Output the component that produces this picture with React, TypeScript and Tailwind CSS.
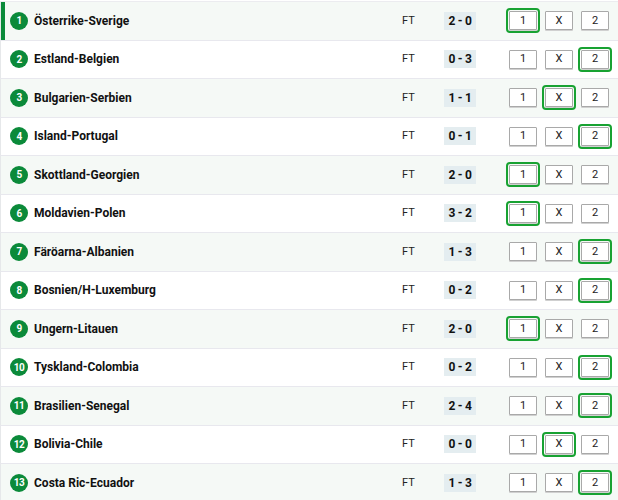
import React from 'react';

type Pick = '1' | 'X' | '2';

interface Match {
    id: number;
    name: string;
    score: string;
    pick: Pick;
}

const MATCHES: Match[] = [
    { id: 1, name: 'Österrike-Sverige', score: '2 - 0', pick: '1' },
    { id: 2, name: 'Estland-Belgien', score: '0 - 3', pick: '2' },
    { id: 3, name: 'Bulgarien-Serbien', score: '1 - 1', pick: 'X' },
    { id: 4, name: 'Island-Portugal', score: '0 - 1', pick: '2' },
    { id: 5, name: 'Skottland-Georgien', score: '2 - 0', pick: '1' },
    { id: 6, name: 'Moldavien-Polen', score: '3 - 2', pick: '1' },
    { id: 7, name: 'Färöarna-Albanien', score: '1 - 3', pick: '2' },
    { id: 8, name: 'Bosnien/H-Luxemburg', score: '0 - 2', pick: '2' },
    { id: 9, name: 'Ungern-Litauen', score: '2 - 0', pick: '1' },
    { id: 10, name: 'Tyskland-Colombia', score: '0 - 2', pick: '2' },
    { id: 11, name: 'Brasilien-Senegal', score: '2 - 4', pick: '2' },
    { id: 12, name: 'Bolivia-Chile', score: '0 - 0', pick: 'X' },
    { id: 13, name: 'Costa Ric-Ecuador', score: '1 - 3', pick: '2' },
];

const OUTCOMES: Pick[] = ['1', 'X', '2'];

const OutcomeBox: React.FC<{ label: Pick; selected: boolean }> = ({ label, selected }) => (
    <div
        className={`w-[28px] h-[19px] flex items-center justify-center bg-white border border-[#a9a9a9] rounded-[1px] shadow-[0_1px_0_#d0d0d0] text-[11px] text-[#222] ${
            selected ? 'outline-2 outline-offset-1 outline-[#18a232]' : ''
        }`}
    >
        {label}
    </div>
);

const App: React.FC = () => {
    return (
        <div className="w-[618px] h-[500px] overflow-hidden bg-white font-['Roboto',sans-serif] pt-px">
            <div className="border-t border-[#ececf0]">
                {MATCHES.map((m, i) => (
                    <div
                        key={m.id}
                        className={`h-[38.5px] flex items-center border-b border-[#e8e8ee] border-l border-l-[#e6e8ea] ${
                            i % 2 === 0 ? 'bg-[#f5f9f6]' : 'bg-white'
                        } ${i === 0 ? 'shadow-[inset_4px_0_0_#0b8a3a]' : ''}`}
                    >
                        <div className="pl-[9px] flex items-center gap-[6px] flex-1 min-w-0">
                            <span className="w-[18px] h-[18px] rounded-full bg-[#0b8a3a] text-white text-[10px] font-bold flex items-center justify-center tracking-[-0.5px]">
                                {m.id}
                            </span>
                            <span className="text-[12px] font-bold text-[#111]">{m.name}</span>
                        </div>
                        <span className="w-[42px] text-[11px] text-[#222]">FT</span>
                        <span className="w-[32px] h-[18px] bg-[#e4edf0] flex items-center justify-center text-[12px] font-bold text-[#111] tracking-[-0.3px]">
                            {m.score}
                        </span>
                        <div className="flex items-center gap-[8px] ml-[33px] mr-[9px]">
                            {OUTCOMES.map(o => (
                                <OutcomeBox key={o} label={o} selected={m.pick === o} />
                            ))}
                        </div>
                    </div>
                ))}
            </div>
        </div>
    );
};

export default App;
